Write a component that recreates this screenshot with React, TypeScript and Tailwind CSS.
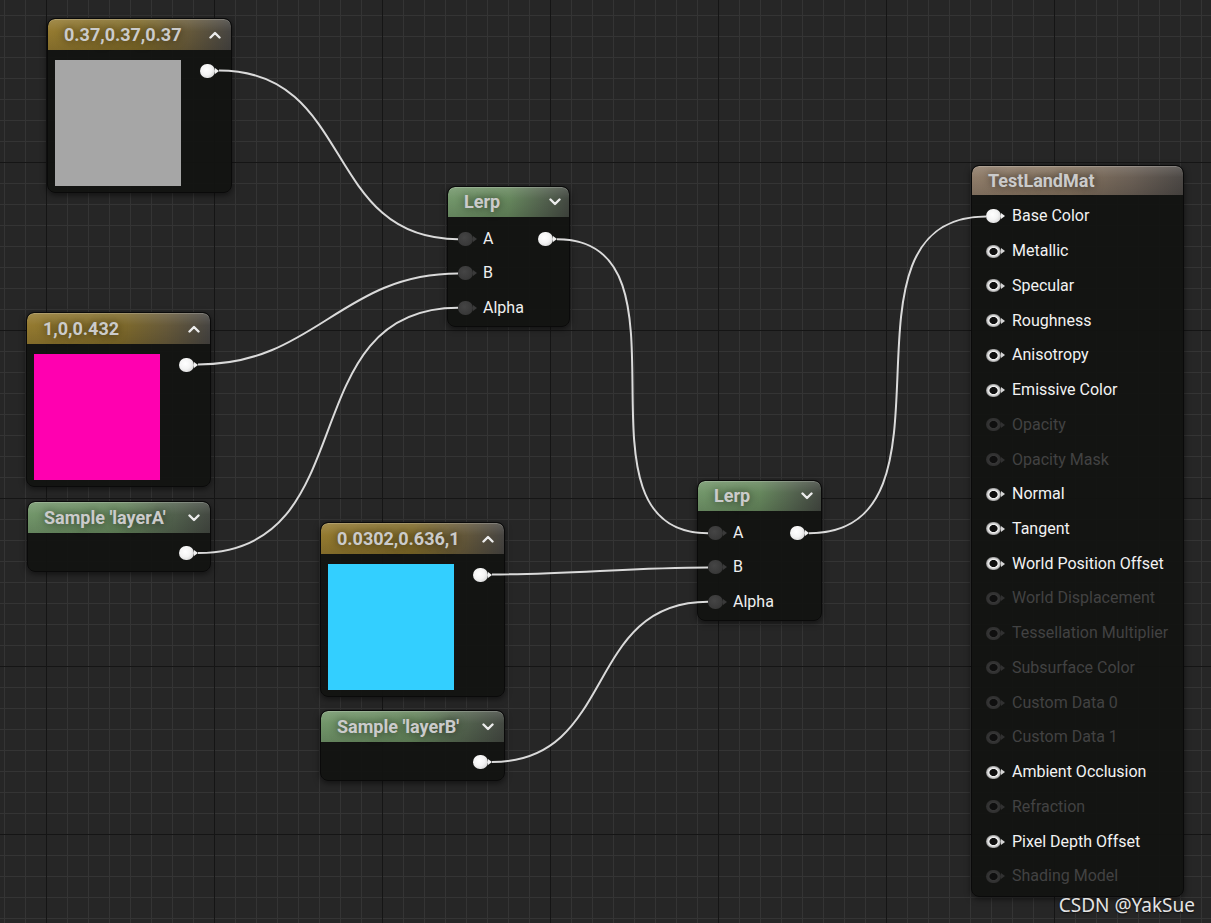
import React from 'react';

type PinKind = 'out' | 'in' | 'ring' | 'off';
type Tone = 'gold' | 'green' | 'brown';

const headerTone: Record<Tone, string> = {
  gold: 'bg-[linear-gradient(to_bottom,rgba(255,255,255,0.14),rgba(255,255,255,0)_40%,rgba(0,0,0,0.12)),linear-gradient(to_right,#947a30_0%,#806b2a_50%,#675a3a_76%,#464441_100%)]',
  green: 'bg-[linear-gradient(to_bottom,rgba(255,255,255,0.14),rgba(255,255,255,0)_40%,rgba(0,0,0,0.12)),linear-gradient(to_right,#72966a_0%,#66875d_50%,#556650_76%,#434841_100%)]',
  brown: 'bg-[linear-gradient(to_bottom,rgba(255,255,255,0.14),rgba(255,255,255,0)_40%,rgba(0,0,0,0.12)),linear-gradient(to_right,#8f7c69_0%,#85735f_45%,#6a5f55_76%,#4c4845_100%)]',
};

function Pin({ kind }: { kind: PinKind }) {
  const circle = {
    out: 'h-[14px] bg-[radial-gradient(circle_at_42%_40%,#ffffff_0%,#f4f4f4_45%,#c4c4c4_100%)]',
    in: 'h-[14px] bg-[radial-gradient(circle_at_42%_40%,#454545_0%,#3a3a3a_60%,#303030_100%)]',
    ring: 'h-[13px] bg-[radial-gradient(closest-side,#0f0f0f_0%,#0f0f0f_48%,#f2f2f2_60%,#cfcfcf_80%,#888888_100%)]',
    off: 'h-[13px] bg-[radial-gradient(closest-side,#0f0f0f_0%,#0f0f0f_48%,#363636_60%,#2e2e2e_100%)]',
  }[kind];
  const tri = {
    out: 'border-l-[#f2f2f2]',
    in: 'border-l-[#3a3a3a]',
    ring: 'border-l-[#d6d6d6]',
    off: 'border-l-[#313131]',
  }[kind];
  return (
    <span className="inline-flex items-center shrink-0">
      <span className={`w-[15px] rounded-full ${circle}`} />
      <span className={`w-0 h-0 border-y-[3px] border-y-transparent border-l-[4px] ${tri}`} />
    </span>
  );
}

function Chevron({ up }: { up?: boolean }) {
  return (
    <svg width="12" height="8" viewBox="0 0 12 8" className="shrink-0">
      <polyline
        points={up ? '1.5,6.5 6,2 10.5,6.5' : '1.5,1.5 6,6 10.5,1.5'}
        fill="none"
        stroke="#ececec"
        strokeWidth="2.4"
        strokeLinecap="round"
        strokeLinejoin="round"
      />
    </svg>
  );
}

type NodeProps = {
  title: string;
  tone: Tone;
  place: string;
  header: string;
  chevron?: 'up' | 'down';
  chevronPad?: string;
  children: React.ReactNode;
};

function GraphNode({ title, tone, place, header, chevron, chevronPad = 'pr-[10px]', children }: NodeProps) {
  return (
    <div className={`absolute ${place} flex flex-col rounded-[8px] border border-[#0a0a0a] bg-[rgba(18,19,17,0.93)] shadow-[0_2px_6px_rgba(0,0,0,0.55)] overflow-hidden`}>
      <div className={`${header} ${headerTone[tone]} ${chevronPad} shrink-0 flex items-center pl-[16px] rounded-t-[7px] shadow-[inset_0_1px_0_rgba(255,255,255,0.18)]`}>
        <span className="text-[18px] font-bold text-[#cbcbcb] [text-shadow:0_0_8px_rgba(0,0,0,0.6)] leading-none">{title}</span>
        {chevron && (
          <span className="ml-auto flex">
            <Chevron up={chevron === 'up'} />
          </span>
        )}
      </div>
      {children}
    </div>
  );
}

function ConstNode({ title, color, place }: { title: string; color: string; place: string }) {
  return (
    <GraphNode title={title} tone="gold" place={`${place} w-[185px] h-[175px]`} header="h-[31px]" chevron="up">
      <div className="flex items-start pl-[7px] pt-[10px]">
        <div className={`w-[126px] h-[126px] ${color}`} />
        <span className="ml-[19px] mt-[3.5px] flex">
          <Pin kind="out" />
        </span>
      </div>
    </GraphNode>
  );
}

function SampleNode({ title, place }: { title: string; place: string }) {
  return (
    <GraphNode title={title} tone="green" place={place} header="h-[31px]" chevron="down">
      <div className="h-[38px] flex items-start justify-end pr-[12px] pt-[13px]">
        <Pin kind="out" />
      </div>
    </GraphNode>
  );
}

function LerpNode({ place }: { place: string }) {
  const rows = ['A', 'B', 'Alpha'];
  return (
    <GraphNode title="Lerp" tone="green" place={place} header="h-[30px]" chevron="down" chevronPad="pr-[8px]">
      <div className="flex flex-col pt-[5px] pb-[1px]">
        {rows.map((r) => (
          <div key={r} className="h-[34.3px] flex items-center pl-[10px] pr-[12px]">
            <Pin kind="in" />
            <span className="ml-[6px] text-[16px] text-[#efefef]">{r}</span>
            {r === 'A' && (
              <span className="ml-auto flex">
                <Pin kind="out" />
              </span>
            )}
          </div>
        ))}
      </div>
    </GraphNode>
  );
}

const materialPins: { label: string; on: boolean; linked?: boolean }[] = [
  { label: 'Base Color', on: true, linked: true },
  { label: 'Metallic', on: true },
  { label: 'Specular', on: true },
  { label: 'Roughness', on: true },
  { label: 'Anisotropy', on: true },
  { label: 'Emissive Color', on: true },
  { label: 'Opacity', on: false },
  { label: 'Opacity Mask', on: false },
  { label: 'Normal', on: true },
  { label: 'Tangent', on: true },
  { label: 'World Position Offset', on: true },
  { label: 'World Displacement', on: false },
  { label: 'Tessellation Multiplier', on: false },
  { label: 'Subsurface Color', on: false },
  { label: 'Custom Data 0', on: false },
  { label: 'Custom Data 1', on: false },
  { label: 'Ambient Occlusion', on: true },
  { label: 'Refraction', on: false },
  { label: 'Pixel Depth Offset', on: true },
  { label: 'Shading Model', on: false },
];

function MaterialNode() {
  return (
    <GraphNode title="TestLandMat" tone="brown" place="left-[971px] top-[165px] w-[213px] h-[732px]" header="h-[29px]">
      <div className="flex flex-col pt-[4px]">
        {materialPins.map((p) => (
          <div key={p.label} className="h-[34.74px] flex items-center pl-[14px]">
            <Pin kind={p.linked ? 'out' : p.on ? 'ring' : 'off'} />
            <span className={`ml-[7px] text-[16px] whitespace-nowrap ${p.on ? 'text-[#f2f2f2]' : 'text-[#424242]'}`}>{p.label}</span>
          </div>
        ))}
      </div>
    </GraphNode>
  );
}

// wire from output tip to input pin edge, tangent like the editor's hermite spline
function wire(x1: number, y1: number, x2: number, y2: number) {
  const c = (Math.abs(x2 - x1) + Math.abs(y2 - y1)) / 3;
  return `M ${x1} ${y1} C ${x1 + c} ${y1}, ${x2 - c} ${y2}, ${x2} ${y2}`;
}

const wires = [
  wire(219, 70.5, 458, 239.2),
  wire(198, 364.5, 458, 273.5),
  wire(198, 553, 458, 307.8),
  wire(557, 239.2, 708, 533.2),
  wire(492, 574.5, 708, 567.5),
  wire(492, 762, 708, 601.8),
  wire(809, 533.2, 986, 216.4),
];

export default function App() {
  return (
    <div className="relative w-full h-[923px] overflow-hidden font-['Roboto',sans-serif] bg-[#262626] bg-[image:linear-gradient(to_right,#151515_1px,transparent_1px),linear-gradient(to_bottom,#151515_1px,transparent_1px),linear-gradient(to_right,#343434_1px,transparent_1px),linear-gradient(to_bottom,#343434_1px,transparent_1px)] bg-[size:168px_168px,168px_168px,21px_21px,21px_21px] bg-[position:46px_162px,46px_162px,4px_15px,4px_15px]">
      <ConstNode title="0.37,0.37,0.37" color="bg-[#a6a6a6]" place="left-[47px] top-[18px]" />
      <ConstNode title="1,0,0.432" color="bg-[#ff00b0]" place="left-[26px] top-[312px]" />
      <SampleNode title="Sample 'layerA'" place="left-[27px] top-[501px] w-[184px]" />
      <ConstNode title="0.0302,0.636,1" color="bg-[#33cfff]" place="left-[320px] top-[522px]" />
      <SampleNode title="Sample 'layerB'" place="left-[320px] top-[710px] w-[185px]" />
      <LerpNode place="left-[447px] top-[186px] w-[123px]" />
      <LerpNode place="left-[697px] top-[480px] w-[125px]" />
      <MaterialNode />

      <svg className="absolute inset-0 pointer-events-none" width="1211" height="923">
        {wires.map((d, i) => (
          <path key={i} d={d} fill="none" stroke="#dadada" strokeWidth="2" />
        ))}
      </svg>

      <span className="absolute right-[16px] bottom-[4px] text-[19px] text-[#e4e4e4] font-['Noto_Sans',sans-serif] [text-shadow:0_1px_2px_rgba(0,0,0,0.7)]">
        CSDN @YakSue
      </span>
    </div>
  );
}
